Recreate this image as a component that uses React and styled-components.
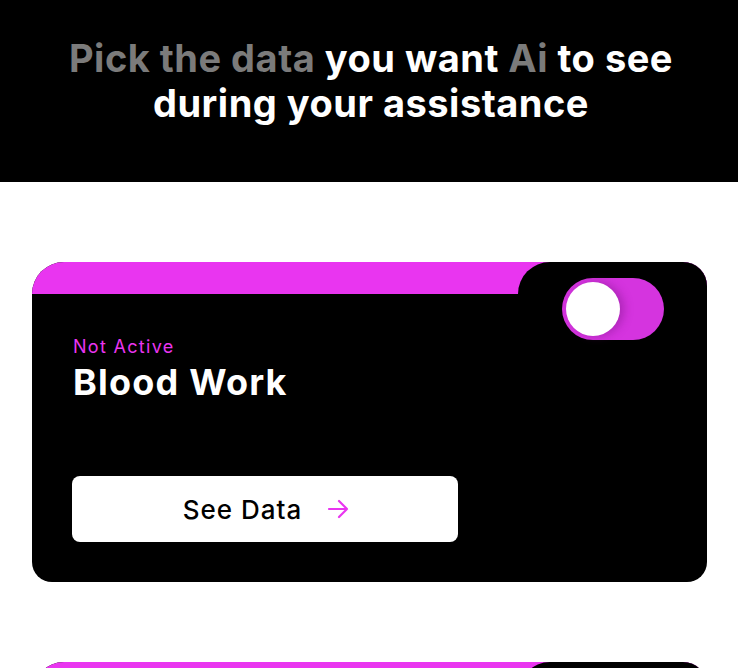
import styled, { createGlobalStyle } from 'styled-components';

const GlobalStyle = createGlobalStyle`
  body {
    margin: 0;
    background: #fff;
    font-family: Inter, "Noto Sans", sans-serif;
  }
`;

const Page = styled.div`
  width: 738px;
  min-height: 668px;
  overflow: hidden;
`;

const Header = styled.header`
  background: #000;
  height: 182px;
  display: flex;
  align-items: center;
  justify-content: center;
  box-sizing: border-box;
  padding: 0 0 20px 4px;
`;

const Title = styled.h1`
  margin: 0;
  color: #fff;
  font-size: 38px;
  font-weight: 700;
  line-height: 45px;
  text-align: center;
  letter-spacing: 0.5px;
`;

const Muted = styled.span`
  color: #7b7b7b;
`;

const List = styled.main`
  display: flex;
  flex-direction: column;
  gap: 80px;
  padding: 80px 31px 0 32px;
`;

const Card = styled.section`
  background: #000;
  border-radius: 32px 24px 20px 20px;
  overflow: hidden;
  height: 320px;
  display: flex;
  flex-direction: column;
`;

const TopRow = styled.div`
  display: flex;
  height: 32px;
  background: #e935f0;
  flex-shrink: 0;
`;

const TopFill = styled.div`
  flex: 1;
`;

const Tab = styled.div`
  width: 189px;
  background: #000;
  border-top-left-radius: 32px;
  position: relative;
`;

const Toggle = styled.button`
  position: absolute;
  top: 16px;
  right: 43px;
  width: 102px;
  height: 62px;
  border: none;
  padding: 0;
  border-radius: 31px;
  background: #d534df;
  cursor: pointer;
  z-index: 1;
`;

const Knob = styled.span`
  position: absolute;
  top: 4px;
  left: ${({ on }) => (on ? '44px' : '4px')};
  width: 54px;
  height: 54px;
  border-radius: 50%;
  background: #fff;
  box-shadow: 4px 0 10px rgba(120, 20, 130, 0.45);
`;

const Body = styled.div`
  flex: 1;
  display: flex;
  flex-direction: column;
  padding: 41px 41px 40px 40px;
`;

const Status = styled.div`
  color: #e935f0;
  font-size: 18px;
  font-weight: 400;
  line-height: 24px;
  letter-spacing: 1.3px;
  margin-left: 1px;
`;

const Name = styled.h2`
  margin: 1px 0 0 1px;
  color: #fff;
  font-size: 36px;
  font-weight: 700;
  line-height: 44px;
  letter-spacing: 1.2px;
`;

const SeeButton = styled.button`
  margin-top: auto;
  width: 386px;
  height: 66px;
  border: none;
  border-radius: 8px;
  background: #fff;
  display: flex;
  align-items: center;
  justify-content: center;
  gap: 25px;
  font-family: inherit;
  font-size: 26px;
  font-weight: 500;
  letter-spacing: 1px;
  color: #000;
  padding: 0 0 0 2px;
  cursor: pointer;
`;

const Arrow = () => (
  <svg width="22" height="22" viewBox="0 0 22 22" fill="none" stroke="#e935f0" strokeWidth="2.2" strokeLinecap="round" strokeLinejoin="round">
    <path d="M2 11h18M12 3l8 8-8 8" />
  </svg>
);

const DataCard = ({ name, active }) => (
  <Card>
    <TopRow>
      <TopFill />
      <Tab>
        <Toggle aria-label="toggle">
          <Knob on={active ? 1 : 0} />
        </Toggle>
      </Tab>
    </TopRow>
    <Body>
      <Status>{active ? 'Active' : 'Not Active'}</Status>
      <Name>{name}</Name>
      <SeeButton>
        See Data
        <Arrow />
      </SeeButton>
    </Body>
  </Card>
);

export default function App() {
  return (
    <Page>
      <GlobalStyle />
      <Header>
        <Title>
          <Muted>Pick the data</Muted> you want <Muted>Ai</Muted> to see
          <br />
          during your assistance
        </Title>
      </Header>
      <List>
        <DataCard name="Blood Work" />
        <DataCard name="Vitals" />
      </List>
    </Page>
  );
}
